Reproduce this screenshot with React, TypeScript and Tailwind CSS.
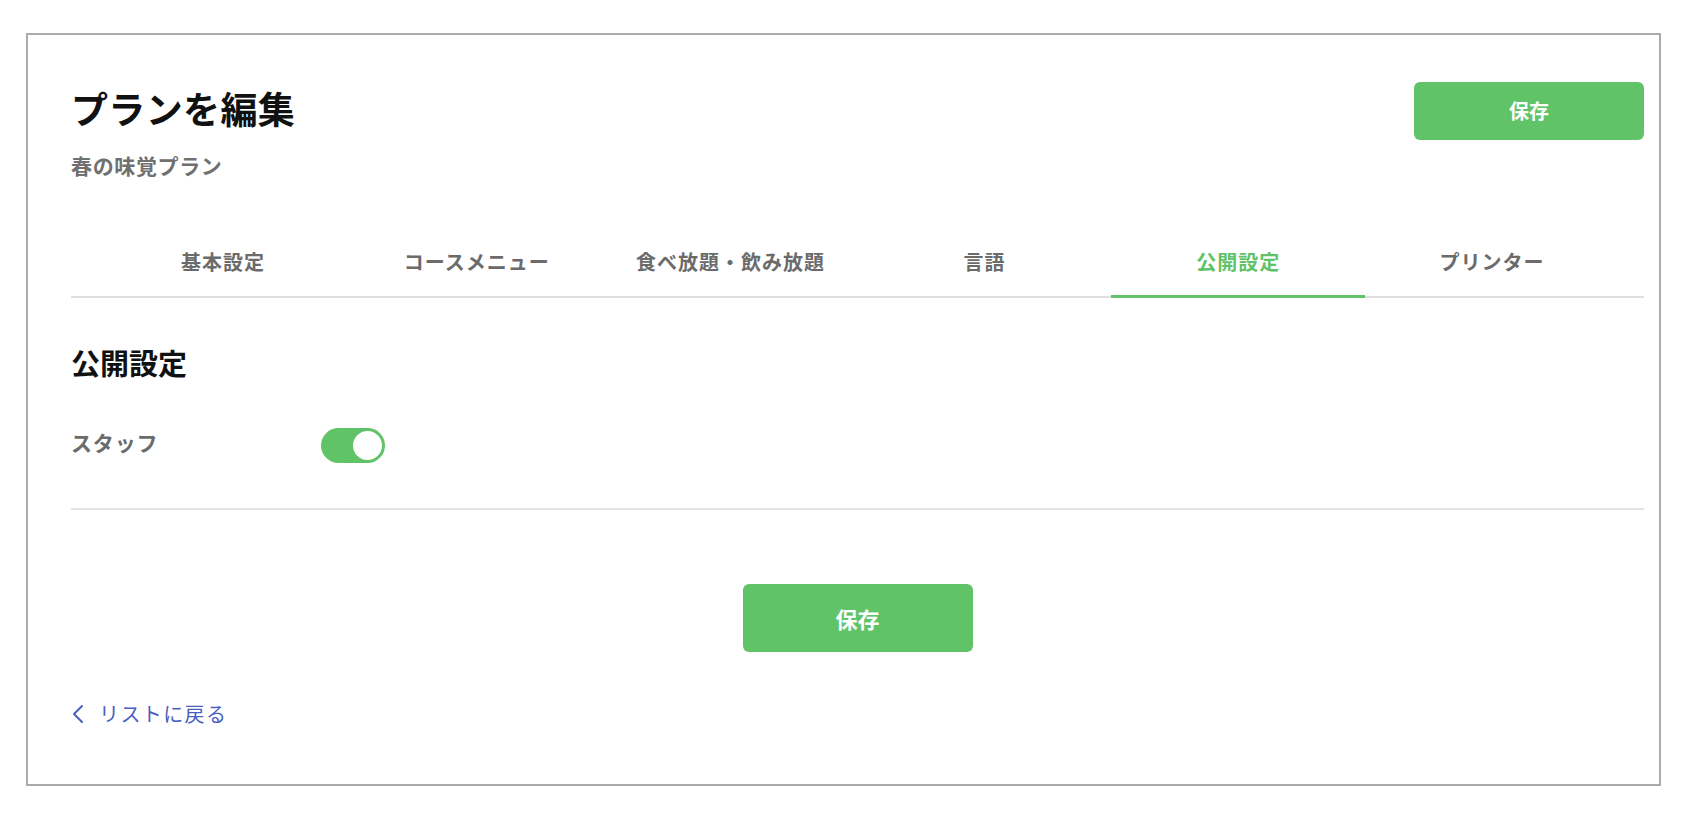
import React from "react";

const tabs = ["基本設定", "コースメニュー", "食べ放題・飲み放題", "言語", "公開設定", "プリンター"];

export default function App() {
  return (
    <div
      className="w-[1692px] h-[816px] bg-white pt-[33px] pl-[26px] pr-[31px]"
      style={{ fontFamily: '"Noto Sans CJK JP", "Noto Sans", sans-serif' }}
    >
      <div className="h-[753px] border-2 border-[#ababab] pl-[43px] pr-[15px] pt-[47px]">
        <div className="flex justify-between items-start">
          <div className="flex flex-col">
            <h1 className="text-[37px] leading-[52px] font-bold text-[#111] tracking-[0.01em]">プランを編集</h1>
            <p className="mt-[17px] text-[21px] leading-[28px] font-bold text-[#707070] tracking-[0.03em]">春の味覚プラン</p>
          </div>
          <button className="w-[230px] h-[58px] rounded-[6px] bg-[#61c367] text-white text-[20px] font-bold">
            保存
          </button>
        </div>

        <div className="mt-[50px] border-b-2 border-[#e0e0e0]">
          <div className="flex px-[25px] -mb-[2px]">
            {tabs.map((t, i) => (
              <div
                key={t}
                className={
                  i === 4
                    ? "flex-1 h-[69px] flex items-center justify-center border-b-[3px] border-[#61c367] text-[#61c367] text-[20px] font-bold tracking-[0.05em]"
                    : "flex-1 h-[69px] flex items-center justify-center border-b-[3px] border-transparent text-[#6b6b6b] text-[20px] font-bold tracking-[0.05em]"
                }
              >
                {t}
              </div>
            ))}
          </div>
        </div>

        <h2 className="mt-[44px] text-[29px] leading-[40px] font-bold text-[#111]">公開設定</h2>

        <div className="mt-[46px] flex items-center h-[35px]">
          <span className="w-[250px] mb-[5px] text-[21px] font-bold text-[#6b6b6b] tracking-[0.04em]">スタッフ</span>
          <div className="w-[64px] h-[35px] rounded-full bg-[#61c367] p-[3px] flex justify-end">
            <div className="w-[29px] h-[29px] rounded-full bg-white" />
          </div>
        </div>

        <div className="mt-[45px] h-[2px] bg-[#e3e3e3]" />

        <div className="mt-[74px] flex justify-center">
          <button className="w-[230px] h-[68px] rounded-[6px] bg-[#61c367] text-white text-[22px] font-bold">
            保存
          </button>
        </div>

        <a className="mt-[48px] flex items-center h-[28px] text-[#4a5fc1] text-[20px] cursor-pointer">
          <svg width="14" height="20" viewBox="0 0 14 20" className="mr-[14px]">
            <polyline points="11,2 3,10 11,18" fill="none" stroke="#4a5fc1" strokeWidth="2" strokeLinecap="round" strokeLinejoin="round" />
          </svg>
          <span className="tracking-[0.07em]">リストに戻る</span>
        </a>
      </div>
    </div>
  );
}
